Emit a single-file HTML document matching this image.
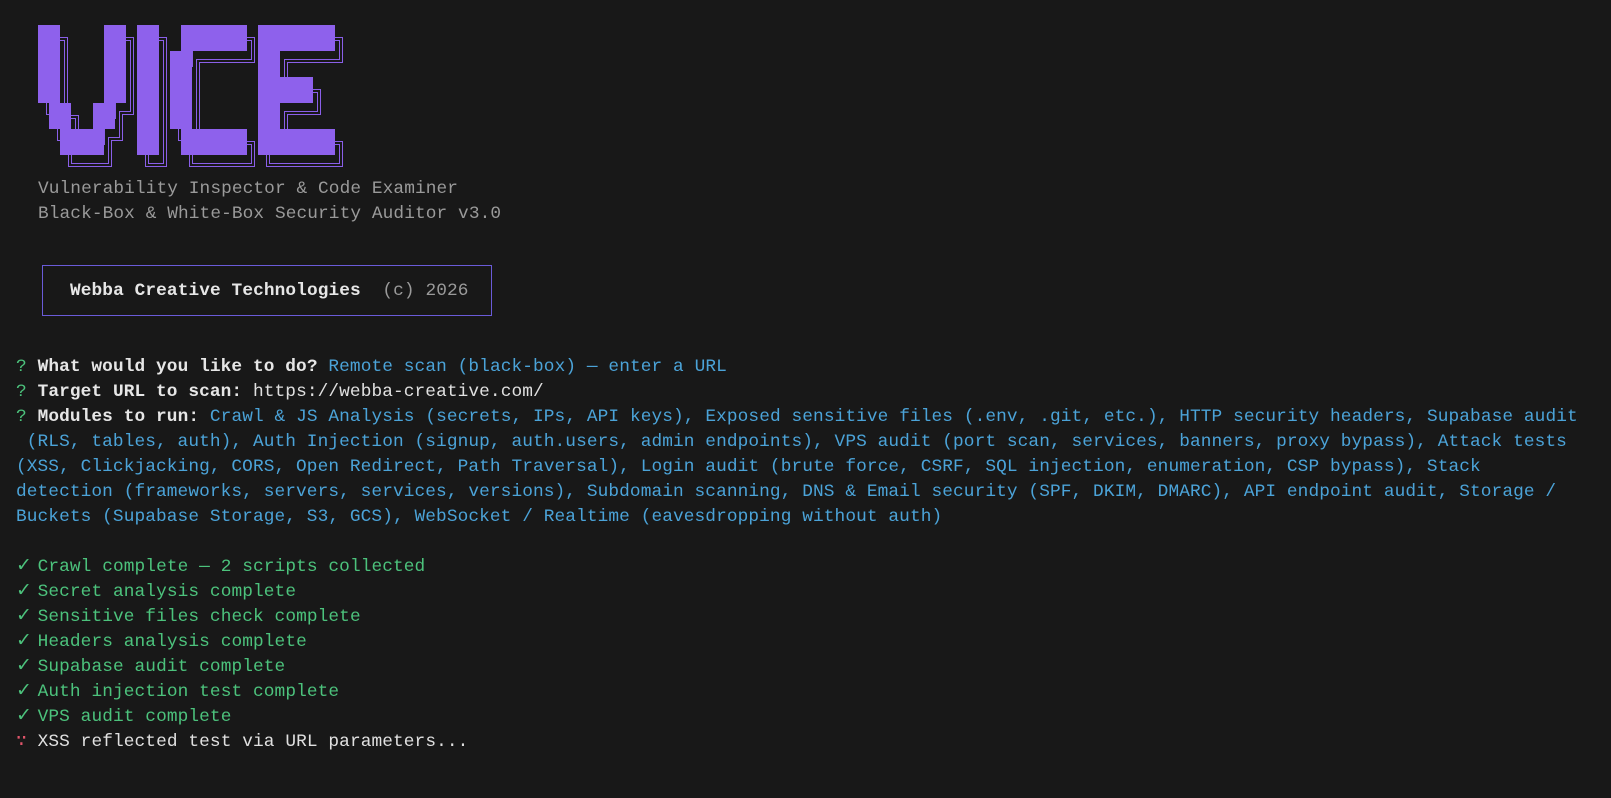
<!DOCTYPE html>
<html><head><meta charset="utf-8"><style>
html,body{margin:0;padding:0;background:#181818;width:1611px;height:798px;overflow:hidden}
body{position:relative;font-family:"Liberation Mono",monospace;font-size:17.8px;letter-spacing:0.1px;color:#d4d4d4}
.t{position:absolute;white-space:pre;line-height:25px}
.g{color:#9a9a9a}
.b{color:#4ba3d8}
.gr{color:#4cc27c}
.ck{display:inline-block;width:21.6px;line-height:0;font-family:"DejaVu Sans",sans-serif;font-weight:bold;font-size:19px;letter-spacing:0}
.w{color:#e6e6e6;font-weight:bold}
.box{position:absolute;left:42px;top:265px;width:448px;height:49px;border:1px solid #6a5bd8}
</style></head><body>
<svg width="400" height="190" style="position:absolute;left:0;top:0">
<defs>
<filter id="ring" x="-10%" y="-10%" width="120%" height="120%">
<feMorphology in="SourceAlpha" operator="erode" radius="1" result="e1"/>
<feMorphology in="SourceAlpha" operator="erode" radius="3" result="e3"/>
<feMorphology in="SourceAlpha" operator="erode" radius="4" result="e4"/>
<feComposite in="SourceAlpha" in2="e1" operator="out" result="r1"/>
<feComposite in="e3" in2="e4" operator="out" result="r2"/>
<feMerge result="m"><feMergeNode in="r1"/><feMergeNode in="r2"/></feMerge>
<feFlood flood-color="#8a5fe8"/>
<feComposite in2="m" operator="in"/>
</filter>
<g id="logo" transform="translate(38,25)">
<rect x="0" y="0" width="22" height="78"/><rect x="66" y="0" width="22" height="78"/>
<rect x="11" y="78" width="22" height="26"/><rect x="55" y="78" width="22" height="26"/>
<rect x="22" y="104" width="44" height="26"/>
<rect x="99" y="0" width="22" height="130"/>
<rect x="143" y="0" width="66" height="26"/><rect x="132" y="26" width="22" height="78"/><rect x="143" y="104" width="66" height="26"/>
<rect x="220" y="0" width="77" height="26"/><rect x="220" y="26" width="22" height="78"/><rect x="242" y="52" width="33" height="26"/><rect x="220" y="104" width="77" height="26"/>
</g>
</defs>
<g transform="translate(8,12)" filter="url(#ring)" fill="#fff"><use href="#logo"/></g>
<g fill="#8e61ec"><use href="#logo"/></g>
</svg>
<div class="t g" style="left:38px;top:177px">Vulnerability Inspector &amp; Code Examiner
Black-Box &amp; White-Box Security Auditor v3.0</div>
<div class="box"></div>
<div class="t" style="left:70px;top:279px"><span class="w">Webba Creative Technologies</span>  <span class="g">(c) 2026</span></div>
<div class="t" style="left:16px;top:355px"><span class="gr">?</span> <span class="w">What would you like to do?</span> <span class="b">Remote scan (black-box) — enter a URL</span>
<span class="gr">?</span> <span class="w">Target URL to scan:</span> <span style="color:#e0e0e0">https://webba-creative.com/</span>
<span class="gr">?</span> <span class="w">Modules to run:</span> <span class="b">Crawl &amp; JS Analysis (secrets, IPs, API keys), Exposed sensitive files (.env, .git, etc.), HTTP security headers, Supabase audit
 (RLS, tables, auth), Auth Injection (signup, auth.users, admin endpoints), VPS audit (port scan, services, banners, proxy bypass), Attack tests
(XSS, Clickjacking, CORS, Open Redirect, Path Traversal), Login audit (brute force, CSRF, SQL injection, enumeration, CSP bypass), Stack
detection (frameworks, servers, services, versions), Subdomain scanning, DNS &amp; Email security (SPF, DKIM, DMARC), API endpoint audit, Storage /
Buckets (Supabase Storage, S3, GCS), WebSocket / Realtime (eavesdropping without auth)</span>

<span class="gr"><span class="ck">✓</span>Crawl complete — 2 scripts collected
<span class="ck">✓</span>Secret analysis complete
<span class="ck">✓</span>Sensitive files check complete
<span class="ck">✓</span>Headers analysis complete
<span class="ck">✓</span>Supabase audit complete
<span class="ck">✓</span>Auth injection test complete
<span class="ck">✓</span>VPS audit complete</span>
<span style="color:#e0556a">∵</span> <span style="color:#e0e0e0">XSS reflected test via URL parameters...</span></div>
</body></html>
